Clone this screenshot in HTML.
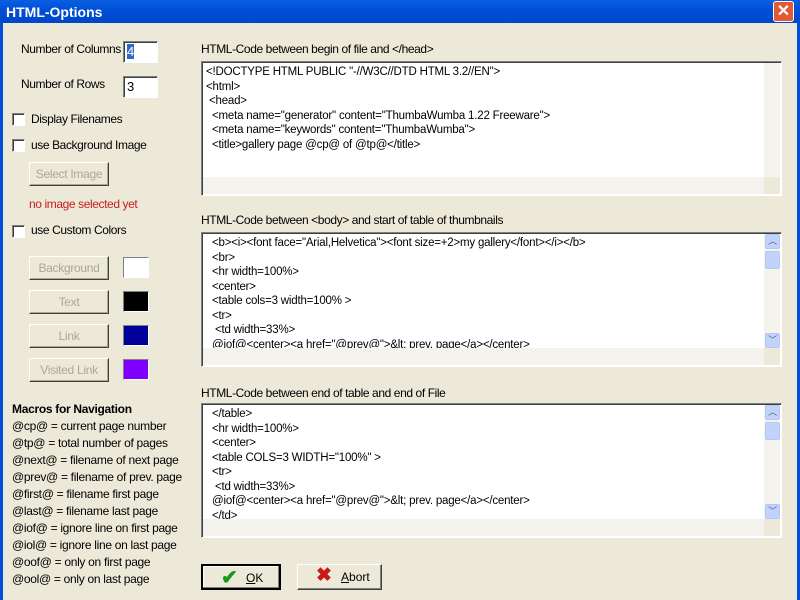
<!DOCTYPE html>
<html><head><style>
*{margin:0;padding:0;box-sizing:border-box}
body{width:800px;height:600px;overflow:hidden;background:#ece9d8;font-family:"Liberation Sans",sans-serif;font-size:12px;color:#000;position:relative}
.tb{position:absolute;left:0;top:0;width:800px;height:23px;background:linear-gradient(#0a5fe0,#0050d8 40%,#0046c8);color:#fff;font-weight:bold;font-size:14px;padding:4px 6px}
.lb{position:absolute;left:0;top:23px;width:3px;height:577px;background:#0050d8}
.rb{position:absolute;right:0;top:23px;width:3px;height:577px;background:#0050d8}
.x{position:absolute;left:773px;top:1px;width:21px;height:21px;background:#e05a35;border:1px solid #fff;border-radius:3px;color:#fff;font-size:16px;font-weight:bold;text-align:center;line-height:19px}
.a{position:absolute;white-space:nowrap}
.l{letter-spacing:-0.4px}
.in{position:absolute;background:#fff;border:1px solid;border-color:#808080 #fff #fff #808080;box-shadow:inset 1px 1px 0 #404040;padding:2px 3px;font-size:13px}
.cb{position:absolute;width:13px;height:13px;background:#fff;border:1px solid;border-color:#808080 #fff #fff #808080;box-shadow:inset 1px 1px 0 #404040}
.btn{position:absolute;width:80px;height:24px;border:1px solid;border-color:#fff #404040 #404040 #fff;box-shadow:inset -1px -1px 0 #aca899;color:#aca899;text-align:center;line-height:22px;letter-spacing:-0.3px}
.sw{position:absolute;width:26px;height:21px;border:1px solid;border-color:#808080 #fff #fff #808080}
.ta{position:absolute;left:201px;width:581px;height:135px;background:#fff;border:1px solid;border-color:#808080 #fff #fff #808080;box-shadow:inset 1px 1px 0 #404040;font-size:11.5px;line-height:14.5px;padding:3px 0 0 4px;white-space:pre;overflow:hidden;letter-spacing:-0.2px}
.vs{position:absolute;right:1px;top:1px;width:16px;height:115px;background:#f4f3ee}
.hs{position:absolute;left:1px;bottom:1px;width:563px;height:17px;background:#f4f3ee}
.cr{position:absolute;right:1px;bottom:1px;width:16px;height:17px;background:#ece9d8}
.ar{position:absolute;width:15px;height:15px;background:#c1d3fb;border:1px solid #b5c8f5;border-radius:2px;color:#4d6185;font-size:9px;text-align:center;line-height:13px}
.th{position:absolute;right:1px;top:18px;width:15px;height:18px;background:#c1d3fb;border:1px solid #b5c8f5;border-radius:2px}
.pb{position:absolute;height:26px;border:1px solid;border-color:#fff #404040 #404040 #fff;box-shadow:inset -1px -1px 0 #808080;font-size:12px;line-height:24px}
.m{font-size:12px;line-height:17px;letter-spacing:-0.3px}
</style></head><body>
<div class="tb">HTML-Options</div>
<div class="x">✕</div>
<div class="lb"></div><div class="rb"></div>

<div class="a l" style="left:21px;top:42px">Number of Columns</div>
<div class="in" style="left:123px;top:41px;width:35px;height:22px"><span style="background:#316ac5;color:#fff">4</span></div>
<div class="a l" style="left:21px;top:77px">Number of Rows</div>
<div class="in" style="left:123px;top:76px;width:35px;height:22px">3</div>
<div class="cb" style="left:12px;top:113px"></div><div class="a l" style="left:31px;top:112px">Display Filenames</div>
<div class="cb" style="left:12px;top:139px"></div><div class="a l" style="left:31px;top:138px">use Background Image</div>
<div class="btn" style="left:29px;top:162px">Select Image</div>
<div class="a l" style="left:29px;top:197px;color:#c81e1e">no image selected yet</div>
<div class="cb" style="left:12px;top:225px"></div><div class="a l" style="left:31px;top:223px">use Custom Colors</div>
<div class="btn" style="left:29px;top:256px">Background</div><div class="sw" style="left:123px;top:257px;background:#fff"></div>
<div class="btn" style="left:29px;top:290px">Text</div><div class="sw" style="left:123px;top:291px;background:#000"></div>
<div class="btn" style="left:29px;top:324px">Link</div><div class="sw" style="left:123px;top:325px;background:#000099"></div>
<div class="btn" style="left:29px;top:358px">Visited Link</div><div class="sw" style="left:123px;top:359px;background:#8000ff"></div>

<div class="a m" style="left:12px;top:401px;font-weight:bold">Macros for Navigation</div>
<div class="a m" style="left:12px;top:418px">@cp@ = current page number<br>@tp@ = total number of pages<br>@next@ = filename of next page<br>@prev@ = filename of prev. page<br>@first@ = filename first page<br>@last@ = filename last page<br>@iof@ = ignore line on first page<br>@iol@ = ignore line on last page<br>@oof@ = only on first page<br>@ool@ = only on last page</div>

<div class="a l" style="left:201px;top:42px">HTML-Code between begin of file and &lt;/head&gt;</div>
<div class="ta" style="top:61px">&lt;!DOCTYPE HTML PUBLIC "-//W3C//DTD HTML 3.2//EN"&gt;
&lt;html&gt;
 &lt;head&gt;
  &lt;meta name="generator" content="ThumbaWumba 1.22 Freeware"&gt;
  &lt;meta name="keywords" content="ThumbaWumba"&gt;
  &lt;title&gt;gallery page @cp@ of @tp@&lt;/title&gt;<div class="vs"></div><div class="hs"></div><div class="cr"></div></div>

<div class="a l" style="left:201px;top:213px">HTML-Code between &lt;body&gt; and start of table of thumbnails</div>
<div class="ta" style="top:232px">  &lt;b&gt;&lt;i&gt;&lt;font face="Arial,Helvetica"&gt;&lt;font size=+2&gt;my gallery&lt;/font&gt;&lt;/i&gt;&lt;/b&gt;
  &lt;br&gt;
  &lt;hr width=100%&gt;
  &lt;center&gt;
  &lt;table cols=3 width=100% &gt;
  &lt;tr&gt;
   &lt;td width=33%&gt;
  @iof@&lt;center&gt;&lt;a href="@prev@"&gt;&amp;lt; prev. page&lt;/a&gt;&lt;/center&gt;<div class="vs"></div><div class="ar" style="right:1px;top:1px">︿</div><div class="th"></div><div class="ar" style="right:1px;top:100px">﹀</div><div class="hs"></div><div class="cr"></div></div>

<div class="a l" style="left:201px;top:386px">HTML-Code between end of table and end of File</div>
<div class="ta" style="top:403px">  &lt;/table&gt;
  &lt;hr width=100%&gt;
  &lt;center&gt;
  &lt;table COLS=3 WIDTH="100%" &gt;
  &lt;tr&gt;
   &lt;td width=33%&gt;
  @iof@&lt;center&gt;&lt;a href="@prev@"&gt;&amp;lt; prev. page&lt;/a&gt;&lt;/center&gt;
  &lt;/td&gt;<div class="vs"></div><div class="ar" style="right:1px;top:1px">︿</div><div class="th"></div><div class="ar" style="right:1px;top:100px">﹀</div><div class="hs"></div><div class="cr"></div></div>

<div class="pb" style="left:201px;top:564px;width:80px;border:2px solid #000;box-shadow:inset -1px -1px 0 #808080,inset 1px 1px 0 #fff"><span style="position:absolute;left:18px;top:0;color:#1a9a1a;font-size:20px;font-weight:bold">✔</span><span style="position:absolute;left:43px"><u>O</u>K</span></div>
<div class="pb" style="left:297px;top:564px;width:85px"><span style="position:absolute;left:18px;top:-1px;color:#c81818;font-size:19px;font-weight:bold">✖</span><span style="position:absolute;left:43px"><u>A</u>bort</span></div>
</body></html>
